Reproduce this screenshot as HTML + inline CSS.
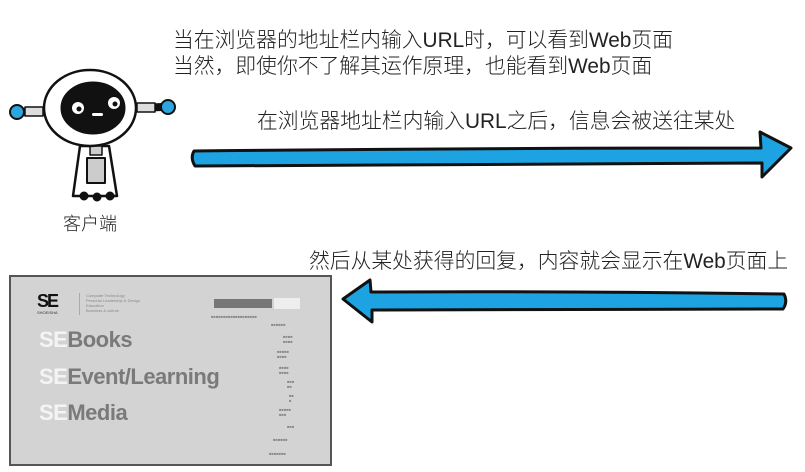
<!DOCTYPE html>
<html><head><meta charset="utf-8"><style>
body{margin:0;width:805px;height:472px;background:#fff;position:relative;overflow:hidden;font-family:"Liberation Sans","Noto Sans CJK SC",sans-serif;}
.t{position:absolute;font-size:20.8px;color:#222;white-space:nowrap;font-weight:300}
.box{position:absolute;left:9px;top:275px;width:323px;height:191px;background:#d3d3d3;border:2px solid #555;box-sizing:border-box}
.big{position:absolute;font-weight:bold;font-size:22px;color:#7a7a7a;letter-spacing:-0.5px;white-space:nowrap}
.big b{color:#f4f4f4}
.sm{position:absolute;font-size:4px;color:#888;white-space:nowrap}
</style></head><body>
<div class="t" style="left:173px;top:23px">当在浏览器的地址栏内输入URL时，可以看到Web页面</div>
<div class="t" style="left:173px;top:49px">当然，即使你不了解其运作原理，也能看到Web页面</div>
<div class="t" style="left:257px;top:104px">在浏览器地址栏内输入URL之后，信息会被送往某处</div>
<div class="t" style="left:309px;top:244px">然后从某处获得的回复，内容就会显示在Web页面上</div>
<div class="t" style="left:63px;top:210px;font-size:18px">客户端</div>

<svg width="805" height="472" style="position:absolute;left:0;top:0">
<g stroke="#111" stroke-width="3" stroke-linejoin="round">
<path d="M194 151 Q190 158 195 166 L762 163 L762 177 L791 148 L760 132 L761 148 Q470 148 194 151 Z" fill="#1ea3e2"/>
<path d="M784 294 Q788 302 783 309 L372 310 L372 322 L343 299 L370 280 L371 292 Q580 291 784 294 Z" fill="#1ea3e2"/>
<!-- robot -->
<line x1="20" y1="112" x2="48" y2="111" stroke-width="8"/>
<line x1="132" y1="108" x2="163" y2="107" stroke-width="8"/>
<rect x="25" y="107" width="18" height="9" fill="#ddd" stroke-width="1.5"/>
<rect x="137" y="103" width="18" height="9" fill="#ddd" stroke-width="1.5"/>
<circle cx="17" cy="112" r="7" fill="#2ba6e0" stroke-width="2"/>
<circle cx="168" cy="107" r="7" fill="#2ba6e0" stroke-width="2"/>
<path d="M80 146 L109 146 L117 196 L73 196 Z" fill="#fff" stroke-width="2.5"/>
<rect x="90" y="146" width="12" height="9" fill="#ccc" stroke-width="1.5"/>
<rect x="87" y="158" width="18" height="25" fill="#ccc" stroke-width="2"/>
<circle cx="84" cy="196" r="3" fill="#111"/><circle cx="97" cy="197" r="3" fill="#111"/><circle cx="110" cy="196" r="3" fill="#111"/>
<ellipse cx="90" cy="108" rx="46" ry="38" fill="#fff" stroke-width="2.5"/>
<ellipse cx="93" cy="108" rx="31" ry="25" fill="#111"/>
<circle cx="78" cy="108" r="6" fill="#fff" stroke="none"/><circle cx="114" cy="103" r="6" fill="#fff" stroke="none"/>
<circle cx="79" cy="109" r="2.5" fill="#111" stroke="none"/><circle cx="115" cy="104" r="2.5" fill="#111" stroke="none"/>
<rect x="92" y="113" width="11" height="3" rx="1.5" fill="#fff" stroke="none"/>
</g>
</svg>

<div class="box">
<div style="position:absolute;left:26px;top:14px;font:bold 18px 'Liberation Sans';color:#111;letter-spacing:-2px">SE</div>
<div class="sm" style="left:26px;top:33px;color:#333">SHOEISHA</div>
<div style="position:absolute;left:68px;top:16px;width:1px;height:22px;background:#aaa"></div>
<div class="sm" style="left:75px;top:16px">Computer Technology<br>Personal Leadership &amp; Design<br>Education<br>Business &amp; culture</div>
<div style="position:absolute;left:203px;top:22px;width:58px;height:9px;background:#777"></div>
<div style="position:absolute;left:263px;top:21px;width:26px;height:11px;background:#eee"></div>
<div class="big" style="left:28px;top:50px"><b>SE</b>Books</div>
<div class="big" style="left:28px;top:87px"><b>SE</b>Event/Learning</div>
<div class="big" style="left:28px;top:123px"><b>SE</b>Media</div>
<div class="sm" style="left:200px;top:37px">■■■■■■■■■■■■■■■■■■■</div>
<div class="sm" style="left:260px;top:45px">■■■■■■</div>
<div class="sm" style="left:272px;top:57px">■■■■<br>■■■■</div>
<div class="sm" style="left:266px;top:72px">■■■■■<br>■■■■</div>
<div class="sm" style="left:268px;top:88px">■■■■<br>■■■■</div>
<div class="sm" style="left:276px;top:102px">■■■<br>■■</div>
<div class="sm" style="left:278px;top:116px">■■<br>■</div>
<div class="sm" style="left:268px;top:130px">■■■■■<br>■■■</div>
<div class="sm" style="left:276px;top:147px">■■■</div>
<div class="sm" style="left:262px;top:160px">■■■■■■</div>
<div class="sm" style="left:258px;top:174px">■■■■■■■</div>
</div>
</body></html>
